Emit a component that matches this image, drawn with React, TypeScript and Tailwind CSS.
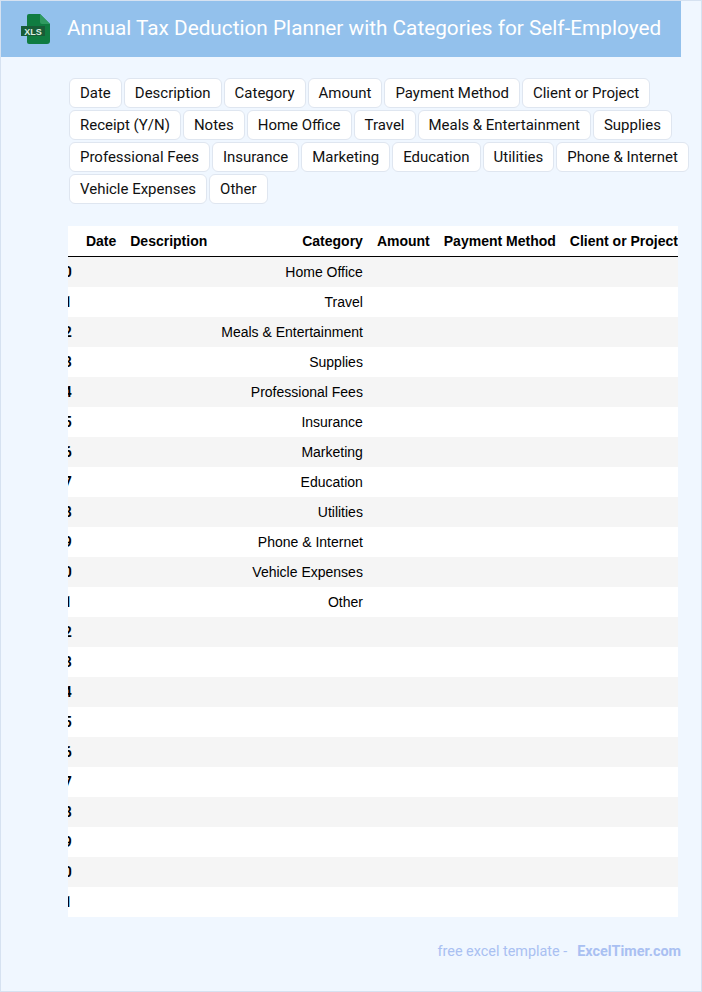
const TAGS = [
  'Date',
  'Description',
  'Category',
  'Amount',
  'Payment Method',
  'Client or Project',
  'Receipt (Y/N)',
  'Notes',
  'Home Office',
  'Travel',
  'Meals & Entertainment',
  'Supplies',
  'Professional Fees',
  'Insurance',
  'Marketing',
  'Education',
  'Utilities',
  'Phone & Internet',
  'Vehicle Expenses',
  'Other',
];

const COLUMNS = ['Date', 'Description', 'Category', 'Amount', 'Payment Method', 'Client or Project'];

const CATEGORIES = [
  'Home Office',
  'Travel',
  'Meals & Entertainment',
  'Supplies',
  'Professional Fees',
  'Insurance',
  'Marketing',
  'Education',
  'Utilities',
  'Phone & Internet',
  'Vehicle Expenses',
  'Other',
];

const ROW_COUNT = 22;

function XlsIcon() {
  return (
    <svg width="30" height="30" viewBox="0 0 30 30" aria-hidden="true" className="shrink-0">
      <path d="M6 2 a2 2 0 0 1 2-2 H19 L29 10 V27 a3 3 0 0 1-3 3 H8 a2 2 0 0 1-2-2 Z" fill="#107c41" />
      <path d="M19 0 L29 10 H21 a2 2 0 0 1-2-2 Z" fill="#2f9a60" />
      <rect x="0" y="12" width="24" height="10" fill="#185c37" />
      <text x="12" y="20.5" textAnchor="middle" fontSize="9" fontWeight="700" fill="#dcefe4" fontFamily="'Liberation Sans', sans-serif">
        XLS
      </text>
    </svg>
  );
}

export default function App() {
  return (
    <div className="h-[992px] border border-[#d6e2f1] bg-[#f0f7ff] font-['Roboto',sans-serif]">
      <header className="flex h-14 w-[680px] items-center gap-[16px] bg-[#93c1ec] pl-[20px]">
        <XlsIcon />
        <h1 className="whitespace-nowrap text-[20.77px] font-normal text-white">
          Annual Tax Deduction Planner with Categories for Self-Employed
        </h1>
      </header>

      <div className="mt-[21px] ml-[68px] flex w-[624px] flex-wrap gap-[2px]">
        {TAGS.map((tag) => (
          <span
            key={tag}
            className="h-[30px] rounded-md border border-[#dfe6f0] bg-white px-[10px] text-[14.97px] leading-[28px] text-[#111]"
          >
            {tag}
          </span>
        ))}
      </div>

      <div className="mt-[22px] ml-[67px] w-[610px] overflow-hidden bg-white">
        <table className="ml-[-19.2px] border-separate border-spacing-0 font-['Liberation_Sans',sans-serif] text-sm text-black">
          <thead>
            <tr className="h-[31px]">
              <th className="border-b border-black px-[7px]"></th>
              {COLUMNS.map((col) => (
                <th key={col} className="whitespace-nowrap border-b border-black px-[7px] text-right font-bold">
                  {col}
                </th>
              ))}
            </tr>
          </thead>
          <tbody>
            {Array.from({ length: ROW_COUNT }, (_, i) => (
              <tr key={i} className={i % 2 === 0 ? 'h-[30px] bg-[#f5f5f5]' : 'h-[30px] bg-white'}>
                <th className="px-[7px] text-right font-['Roboto',sans-serif] font-bold">{i}</th>
                <td className="px-[7px]"></td>
                <td className="px-[7px]"></td>
                <td className="whitespace-nowrap px-[7px] text-right">{CATEGORIES[i] ?? ''}</td>
                <td className="px-[7px]"></td>
                <td className="px-[7px]"></td>
                <td className="px-[7px]"></td>
              </tr>
            ))}
          </tbody>
        </table>
      </div>

      <footer className="mt-[24px] flex w-[680px] justify-end gap-[10px] text-[14.4px] text-[#a9c0f2]">
        <span>free excel template -</span>
        <span className="font-bold">ExcelTimer.com</span>
      </footer>
    </div>
  );
}
